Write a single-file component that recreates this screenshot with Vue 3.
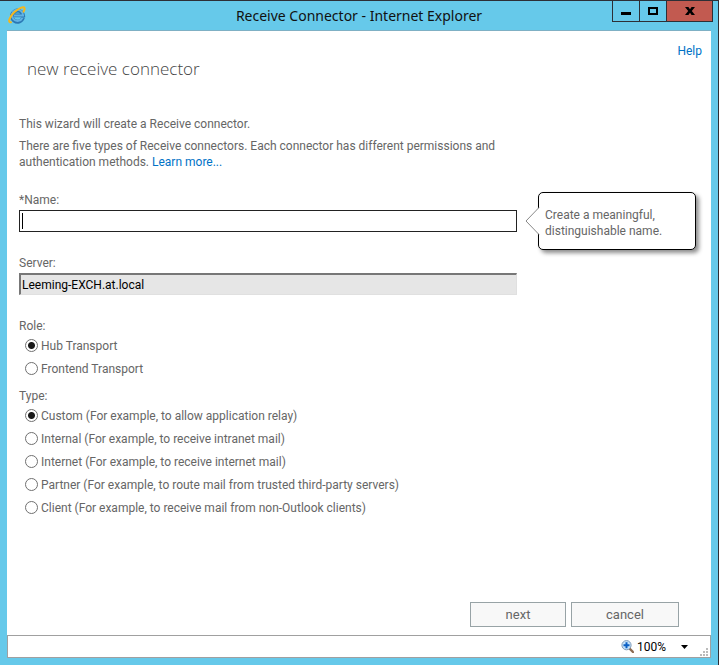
<script setup>
import { ref } from 'vue'

const name = ref('')
const server = ref('Leeming-EXCH.at.local')
const role = ref('hub')
const type = ref('custom')

const roles = [
  { value: 'hub', label: 'Hub Transport' },
  { value: 'frontend', label: 'Frontend Transport' },
]
const types = [
  { value: 'custom', label: 'Custom (For example, to allow application relay)' },
  { value: 'internal', label: 'Internal (For example, to receive intranet mail)' },
  { value: 'internet', label: 'Internet (For example, to receive internet mail)' },
  { value: 'partner', label: 'Partner (For example, to route mail from trusted third-party servers)' },
  { value: 'client', label: 'Client (For example, to receive mail from non-Outlook clients)' },
]
</script>

<template>
  <div class="window">
    <header class="titlebar">
      <svg class="logo" width="18" height="18" viewBox="0 0 18 18" aria-hidden="true">
        <path d="M15 11.4 A5.6 5.6 0 1 1 15.1 9.4 H5.8" fill="none" stroke="#2a78b4" stroke-width="3.8" />
        <path d="M14.6 11.6 A5.6 5.6 0 1 1 15.1 9.4 H5.8" fill="none" stroke="#62b2e4" stroke-width="2" />
        <path d="M3 16.2 C-0.5 17 1.2 11 6.2 6.3 C10.5 2.2 15.8 0 16.5 2 C16.8 3 16.4 4.3 15.6 5.6" fill="none" stroke="#f5b71c" stroke-width="2" stroke-linecap="round" />
      </svg>
      <h1 class="caption">Receive Connector - Internet Explorer</h1>
      <div class="controls">
        <button type="button" class="control" aria-label="Minimize">
          <svg width="10" height="8" viewBox="0 0 10 8"><path d="M0 5H10V8H0Z" /></svg>
        </button>
        <button type="button" class="control" aria-label="Maximize">
          <svg width="10" height="8" viewBox="0 0 10 8"><path d="M1 1H9V7H1Z" fill="none" stroke="#000" stroke-width="2" /></svg>
        </button>
        <button type="button" class="control close" aria-label="Close">
          <svg width="10" height="8" viewBox="0 0 10 8"><path d="M0 0H3.4L5 2.2L6.6 0H10L6.8 4L10 8H6.6L5 5.8L3.4 8H0L3.2 4Z" /></svg>
        </button>
      </div>
    </header>

    <main class="page">
      <nav class="top"><a class="link" href="#help">Help</a></nav>
      <h2 class="heading">new receive connector</h2>

      <form class="form" @submit.prevent>
        <div class="intro">
          <p>This wizard will create a Receive connector.</p>
          <p>
            There are five types of Receive connectors. Each connector has different permissions and
            authentication methods. <a class="link" href="#learn">Learn more...</a>
          </p>
        </div>

        <div class="field name">
          <label for="name">*Name:</label>
          <input id="name" v-model="name" class="text" type="text" aria-describedby="name-tip" />
        </div>
        <div id="name-tip" class="callout" role="tooltip">
          <svg class="pointer" width="15" height="28" viewBox="0 0 15 28" aria-hidden="true">
            <path d="M15 0.5H14L1 14L14 27.5H15Z" fill="#fff" />
            <path d="M14 0.5L1 14L14 27.5" fill="none" stroke="#888" />
          </svg>
          Create a meaningful, distinguishable name.
        </div>

        <div class="field">
          <label for="server">Server:</label>
          <input id="server" class="text readonly" type="text" :value="server" readonly />
        </div>

        <fieldset class="group first">
          <legend>Role:</legend>
          <label v-for="r in roles" :key="r.value" class="option">
            <input v-model="role" type="radio" name="role" :value="r.value" />{{ r.label }}
          </label>
        </fieldset>
        <fieldset class="group">
          <legend>Type:</legend>
          <label v-for="t in types" :key="t.value" class="option">
            <input v-model="type" type="radio" name="type" :value="t.value" />{{ t.label }}
          </label>
        </fieldset>
      </form>

      <div class="actions">
        <button type="button" class="action">next</button>
        <button type="button" class="action wide">cancel</button>
      </div>
    </main>

    <footer class="status">
      <button type="button" class="zoom">
        <svg width="13" height="13" viewBox="0 0 13 13" aria-hidden="true">
          <path d="M8 8L12 12" stroke="#8c6a50" stroke-width="2.4" stroke-linecap="round" />
          <circle cx="5.5" cy="5.2" r="4.6" fill="#c4e2fa" stroke="#7f9ab8" />
          <path d="M5.5 2.2V8.2M2.5 5.2H8.5" stroke="#0b5fc4" stroke-width="2" />
        </svg>
        <span>100%</span>
        <svg class="arrow" width="7" height="4" viewBox="0 0 7 4" aria-hidden="true"><path d="M0 0H7L3.5 4Z" /></svg>
      </button>
      <svg class="grip" width="8" height="8" viewBox="0 0 8 8" aria-hidden="true">
        <path d="M6 0h2v2h-2zM3 3h2v2h-2zM6 3h2v2h-2zM0 6h2v2h-2zM3 6h2v2h-2zM6 6h2v2h-2z" fill="#bbb" />
      </svg>
    </footer>
  </div>
</template>

<style>
body {
  margin: 0;
}
</style>

<style scoped>
.window {
  box-sizing: border-box;
  display: flex;
  flex-direction: column;
  min-height: 100vh;
  padding: 0 7px 7px;
  border-top: 1px solid #2d2f36;
  border-right: 1px solid #2d2f36;
  background: #66c9ea;
  color: #666;
  font-family: Roboto, "Noto Sans", sans-serif;
  font-size: 12px;
  line-height: 16px;
}
.titlebar {
  display: grid;
  grid-template-columns: 101px 1fr 101px;
  align-items: start;
  height: 29px;
  border-bottom: 1px solid #7fb0c4;
}
.logo {
  margin: 5px 0 0 1px;
}
.caption {
  margin: 5px 0 0;
  color: #111;
  font-family: "Noto Sans", sans-serif;
  font-size: 14px;
  font-weight: 400;
  line-height: 20px;
  text-align: center;
  white-space: nowrap;
}
.controls {
  display: flex;
  justify-content: flex-end;
  margin-right: -2px;
}
.control {
  box-sizing: border-box;
  display: flex;
  flex: none;
  align-items: center;
  justify-content: center;
  width: 28px;
  height: 21px;
  margin-right: -1px;
  padding: 0;
  border: 1px solid #2d2f36;
  border-top: 0;
  background: none;
}
.control.close {
  width: 47px;
  margin-right: 0;
  background: #c25a50;
}
.page {
  display: flex;
  flex: 1;
  flex-direction: column;
  padding: 12px 15px 8px 12px;
  background: #fff;
}
.top {
  align-self: flex-end;
  margin-right: -6px;
}
.link {
  color: #0072c6;
  text-decoration: none;
}
.heading {
  margin: 0 8px 37px;
  color: #444;
  font-family: "Open Sans", sans-serif;
  font-size: 17px;
  font-weight: 300;
  line-height: 20px;
}
.form {
  display: grid;
  grid-template-columns: minmax(0, 1fr) 158px;
  column-gap: 21px;
}
.intro,
.field,
.group {
  grid-column: 1;
}
.intro {
  margin-bottom: 22px;
}
.intro p {
  margin: 0 0 6px;
}
.intro p:last-child {
  margin: 0;
}
.field {
  display: flex;
  flex-direction: column;
  gap: 2px;
}
.text {
  box-sizing: border-box;
  width: 100%;
  height: 22px;
  padding: 0 2px;
  border: 1px solid #222;
  background: linear-gradient(#000, #000) 2px 2px / 1px 16px no-repeat #fff;
  color: #000;
  font: inherit;
  outline: none;
}
.text:focus {
  background: #fff;
}
.readonly,
.readonly:focus {
  border-color: #777 #e0e0e0 #e0e0e0 #777;
  border-width: 2px 1px 1px 2px;
  padding: 0 1px;
  background: #e6e6e6;
}
.callout {
  position: relative;
  box-sizing: border-box;
  margin-bottom: 5px;
  padding: 14px 6px 10px;
  border: 1px solid #000;
  border-radius: 5px;
  background: #fff;
  box-shadow: 3px 3px 4px rgba(0, 0, 0, 0.45);
}
.pointer {
  position: absolute;
  top: 14px;
  left: -14px;
}
.group {
  display: flex;
  flex-direction: column;
  min-width: 0;
  margin: 0 0 8px;
  padding: 0;
  border: 0;
}
.first {
  margin-top: 23px;
}
.group legend {
  padding: 0;
}
.option {
  display: flex;
  align-items: center;
  gap: 3px;
  height: 23px;
  padding-left: 6px;
}
.option input {
  appearance: none;
  box-sizing: border-box;
  flex: none;
  width: 13px;
  height: 13px;
  margin: 0;
  border: 1px solid #707070;
  border-radius: 50%;
  background: #fff;
}
.option input:checked {
  background: radial-gradient(circle, #1a1a1a 3px, #fff 4px);
}
.actions {
  display: flex;
  justify-content: flex-end;
  gap: 5px;
  margin-top: auto;
  padding-right: 17px;
}
.action {
  box-sizing: border-box;
  width: 96px;
  height: 25px;
  padding: 0;
  border: 1px solid #98a3a6;
  background: #f8f8f8;
  color: #666;
  font: inherit;
  font-size: 13px;
}
.wide {
  width: 108px;
}
.status {
  display: flex;
  align-items: center;
  justify-content: flex-end;
  gap: 12px;
  height: 21px;
  padding-right: 2px;
  border: 1px solid #a0a0a0;
  background: #fff;
}
.zoom {
  display: flex;
  align-items: center;
  gap: 3px;
  padding: 0;
  border: 0;
  background: none;
  color: #000;
  font: inherit;
}
.arrow {
  margin-left: 12px;
}
.grip {
  align-self: flex-end;
  margin-bottom: 1px;
}
</style>
